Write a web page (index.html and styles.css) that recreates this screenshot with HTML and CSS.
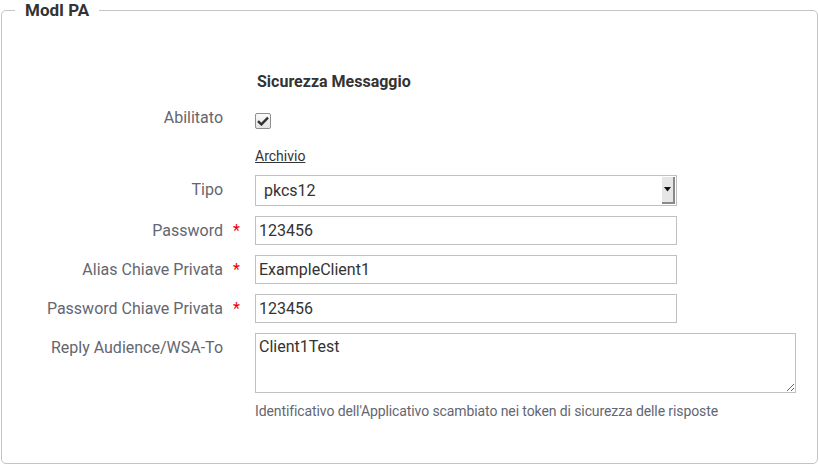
FILE: index.html
```html
<!DOCTYPE html>
<html lang="it">
<head>
<meta charset="utf-8">
<title>ModI PA</title>
<link rel="stylesheet" href="styles.css">
</head>
<body>
<fieldset class="box">
  <legend class="box-legend">ModI PA</legend>
  <div class="form">
    <div class="row row-heading">
      <div class="label"></div>
      <div class="star"></div>
      <div class="field"><span class="heading">Sicurezza Messaggio</span></div>
    </div>
    <div class="row row-check">
      <div class="label">Abilitato</div>
      <div class="star"></div>
      <div class="field">
        <span class="checkbox"><svg width="12" height="10" viewBox="0 0 12 10"><path d="M1 5.2 L4.4 8.4 L11 1.6" fill="none" stroke="#333" stroke-width="2.4"/></svg></span>
      </div>
    </div>
    <div class="row row-link">
      <div class="label"></div>
      <div class="star"></div>
      <div class="field"><a class="link" href="#">Archivio</a></div>
    </div>
    <div class="row">
      <div class="label">Tipo</div>
      <div class="star"></div>
      <div class="field">
        <div class="select"><span class="select-value">pkcs12</span><span class="select-btn"><svg width="7" height="5" viewBox="0 0 7 5"><path d="M0 0 H7 L3.5 4.5 Z" fill="#111"/></svg></span></div>
      </div>
    </div>
    <div class="row">
      <div class="label">Password</div>
      <div class="star">*</div>
      <div class="field"><input class="input" type="text" value="123456"></div>
    </div>
    <div class="row">
      <div class="label">Alias Chiave Privata</div>
      <div class="star">*</div>
      <div class="field"><input class="input" type="text" value="ExampleClient1"></div>
    </div>
    <div class="row">
      <div class="label">Password Chiave Privata</div>
      <div class="star">*</div>
      <div class="field"><input class="input" type="text" value="123456"></div>
    </div>
    <div class="row row-last">
      <div class="label">Reply Audience/WSA-To</div>
      <div class="star"></div>
      <div class="field">
        <textarea class="textarea">Client1Test</textarea>
        <div class="help">Identificativo dell'Applicativo scambiato nei token di sicurezza delle risposte</div>
      </div>
    </div>
  </div>
</fieldset>
</body>
</html>
```
FILE: styles.css
```css
html, body {
  margin: 0;
  padding: 0;
  background: #fff;
}
body {
  font-family: Roboto, "Liberation Sans", Arial, sans-serif;
  font-size: 16px;
  color: #333;
  width: 819px;
  height: 466px;
  overflow: hidden;
}
.box {
  margin: 0 1px 0 1px;
  padding: 0;
  border: 1px solid #c4c4c4;
  border-radius: 5px;
  min-width: 0;
}
.box-legend {
  margin-left: 13px;
  padding: 0 10px;
  font-weight: bold;
  font-size: 17px;
  line-height: 21px;
  color: #333;
}
.form {
  padding: 51px 0 43px 0;
  display: flex;
  flex-direction: column;
  gap: 10px;
}
.row {
  display: grid;
  grid-template-columns: 221px 32px 1fr;
  align-items: start;
}
.label {
  text-align: right;
  color: #646670;
  line-height: 29px;
  white-space: nowrap;
}
.star {
  color: #e00;
  line-height: 29px;
  padding-left: 10px;
  font-size: 16px;
}
.row-heading .label, .row-heading .star { line-height: 20px; }
.heading {
  display: block;
  font-weight: bold;
  line-height: 20px;
  padding-left: 2px;
  color: #333;
}
.row-heading { margin-bottom: 6px; }
.row-check .label { line-height: 20px; }
.row-check .field { height: 22px; }
.row-check { margin-bottom: 6px; }
.checkbox {
  display: flex;
  align-items: center;
  justify-content: center;
  width: 14px;
  height: 14px;
  margin-top: 5px;
  border: 1px solid #8f8f8f;
  border-radius: 2px;
  background: linear-gradient(#fafafa, #e4e4e4);
}
.link {
  display: block;
  line-height: 20px;
  font-size: 14px;
  color: #333;
  text-decoration: underline;
}
.row-link { margin-bottom: -1px; }
.select {
  display: flex;
  width: 422px;
  height: 31px;
  box-sizing: border-box;
  border: 1px solid #c0c0c0;
  background: #fff;
}
.select-value {
  flex: 1;
  padding-left: 8px;
  line-height: 29px;
  color: #333;
}
.select-btn {
  width: 11px;
  margin: 1px 1px 1px 0;
  background: #e6e6e6;
  border-right: 2px solid #8a8a8a;
  border-bottom: 2px solid #8a8a8a;
  display: flex;
  align-items: center;
  justify-content: center;
}
.input {
  display: block;
  width: 422px;
  height: 29px;
  box-sizing: border-box;
  margin: 0;
  padding: 0 3px;
  border: 1px solid #c0c0c0;
  font-family: Roboto, "Liberation Sans", Arial, sans-serif;
  font-size: 16px;
  color: #333;
  outline: none;
}
.textarea {
  display: block;
  width: 541px;
  height: 60px;
  box-sizing: border-box;
  margin: 0;
  padding: 3px 3px;
  border: 1px solid #c0c0c0;
  font-family: Roboto, "Liberation Sans", Arial, sans-serif;
  font-size: 16px;
  line-height: 20px;
  color: #333;
  outline: none;
}
.help {
  margin-top: 9px;
  font-size: 14px;
  letter-spacing: -0.1px;
  line-height: 18px;
  color: #646670;
}
```
